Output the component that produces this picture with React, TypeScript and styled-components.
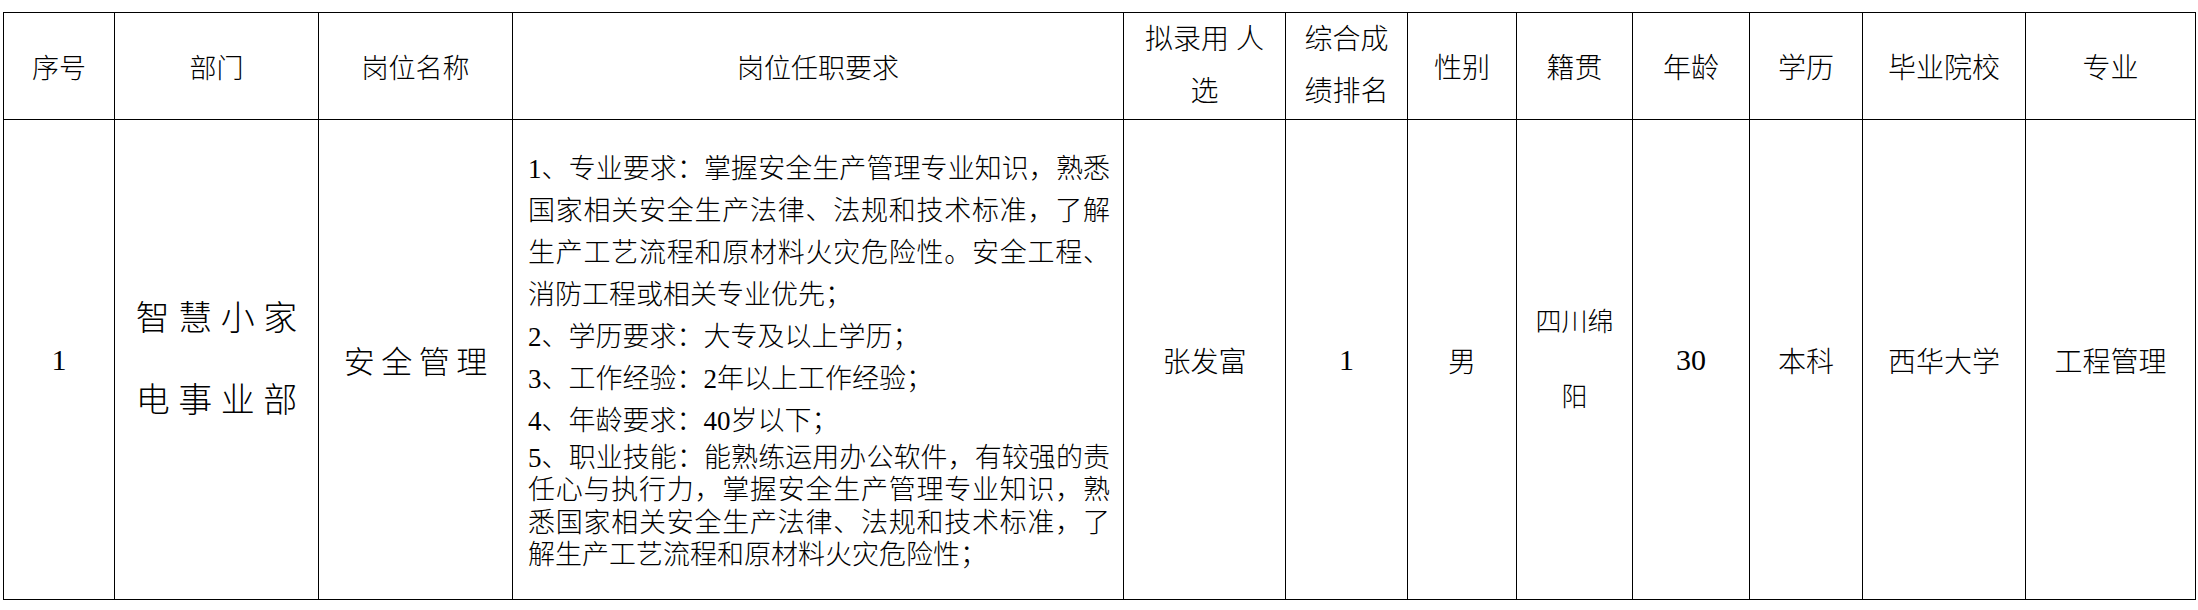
import React from "react";
import styled, { createGlobalStyle } from "styled-components";

const GlobalStyle = createGlobalStyle`
  html, body {
    margin: 0;
    padding: 0;
    background: #ffffff;
  }
  body {
    font-family: "Liberation Serif", "Noto Sans CJK SC", serif;
    color: #000000;
  }
`;

// column widths measured from the reference, border centre to border centre
const columns = [
  { key: "no", width: 111, title: ["序号"], size: 27 },
  { key: "dept", width: 204, title: ["部门"], size: 27 },
  { key: "post", width: 194, title: ["岗位名称"], size: 27 },
  { key: "req", width: 611, title: ["岗位任职要求"], size: 27 },
  { key: "name", width: 162, title: ["拟录用 人", "选"], size: 28 },
  { key: "rank", width: 122, title: ["综合成", "绩排名"], size: 28 },
  { key: "sex", width: 109, title: ["性别"], size: 28 },
  { key: "origin", width: 116, title: ["籍贯"], size: 28 },
  { key: "age", width: 117, title: ["年龄"], size: 28 },
  { key: "edu", width: 113, title: ["学历"], size: 28 },
  { key: "school", width: 163, title: ["毕业院校"], size: 28 },
  { key: "major", width: 170, title: ["专业"], size: 28 },
];

const requirements = [
  {
    text: "1、专业要求：掌握安全生产管理专业知识，熟悉国家相关安全生产法律、法规和技术标准，了解生产工艺流程和原材料火灾危险性。安全工程、消防工程或相关专业优先；",
    tight: false,
  },
  { text: "2、学历要求：大专及以上学历；", tight: false },
  { text: "3、工作经验：2年以上工作经验；", tight: false },
  { text: "4、年龄要求：40岁以下；", tight: false },
  {
    text: "5、职业技能：能熟练运用办公软件，有较强的责任心与执行力，掌握安全生产管理专业知识，熟悉国家相关安全生产法律、法规和技术标准，了解生产工艺流程和原材料火灾危险性；",
    tight: true,
  },
];

export default function App() {
  return (
    <>
      <GlobalStyle />
      <Table>
        <colgroup>
          {columns.map((c) => (
            <Col key={c.key} $w={c.width} />
          ))}
        </colgroup>
        <thead>
          <tr>
            {columns.map((c) => (
              <HeadCell
                key={c.key}
                $size={c.size}
                $twoLine={c.title.length > 1}
              >
                {c.title.map((line, i) => (
                  <React.Fragment key={i}>
                    {i > 0 && <br />}
                    {line}
                  </React.Fragment>
                ))}
              </HeadCell>
            ))}
          </tr>
        </thead>
        <tbody>
          <tr>
            <Cell $size={30}>1</Cell>
            <DeptCell>智慧小家电事业部</DeptCell>
            <PostCell>安全管理</PostCell>
            <ReqCell>
              {requirements.map((r, i) => (
                <ReqItem key={i} $tight={r.tight}>
                  {r.text}
                </ReqItem>
              ))}
            </ReqCell>
            <Cell $size={28}>张发富</Cell>
            <Cell $size={30}>1</Cell>
            <Cell $size={28}>男</Cell>
            <OriginCell>四川绵阳</OriginCell>
            <Cell $size={30}>30</Cell>
            <Cell $size={28}>本科</Cell>
            <Cell $size={28}>西华大学</Cell>
            <Cell $size={28}>工程管理</Cell>
          </tr>
        </tbody>
      </Table>
    </>
  );
}

const Table = styled.table`
  border-collapse: collapse;
  table-layout: fixed;
  width: 2192px;
  margin: 12px 0 0 3px;
  text-spacing-trim: space-all;
  font-weight: 300;
`;

const Col = styled.col<{ $w: number }>`
  width: ${({ $w }) => $w}px;
`;

const HeadCell = styled.th<{ $size: number; $twoLine: boolean }>`
  box-sizing: border-box;
  border: 1.5px solid #000;
  height: 107px;
  padding: 0;
  font-size: ${({ $size }) => $size}px;
  font-weight: 300;
  line-height: ${({ $twoLine }) => ($twoLine ? "52px" : "normal")};
  text-align: center;
  vertical-align: middle;
  white-space: nowrap;
`;

const Cell = styled.td<{ $size: number }>`
  box-sizing: border-box;
  border: 1.5px solid #000;
  height: 480px;
  padding: 0;
  font-size: ${({ $size }) => $size}px;
  text-align: center;
  vertical-align: middle;
`;

const DeptCell = styled(Cell).attrs({ $size: 34 })`
  padding-left: 8.5px;
  letter-spacing: 8.5px;
  line-height: 81.5px;
`;

const PostCell = styled(Cell).attrs({ $size: 31 })`
  padding-left: 6.5px;
  letter-spacing: 6.5px;
`;

const OriginCell = styled(Cell).attrs({ $size: 26 })`
  padding: 0 10px;
  line-height: 75px;
`;

const ReqCell = styled(Cell).attrs({ $size: 27 })`
  padding: 0 13px 0 15px;
  text-align: justify;
`;

const ReqItem = styled.p<{ $tight: boolean }>`
  margin: 0;
  line-height: ${({ $tight }) => ($tight ? "32.5px" : "42px")};
`;
